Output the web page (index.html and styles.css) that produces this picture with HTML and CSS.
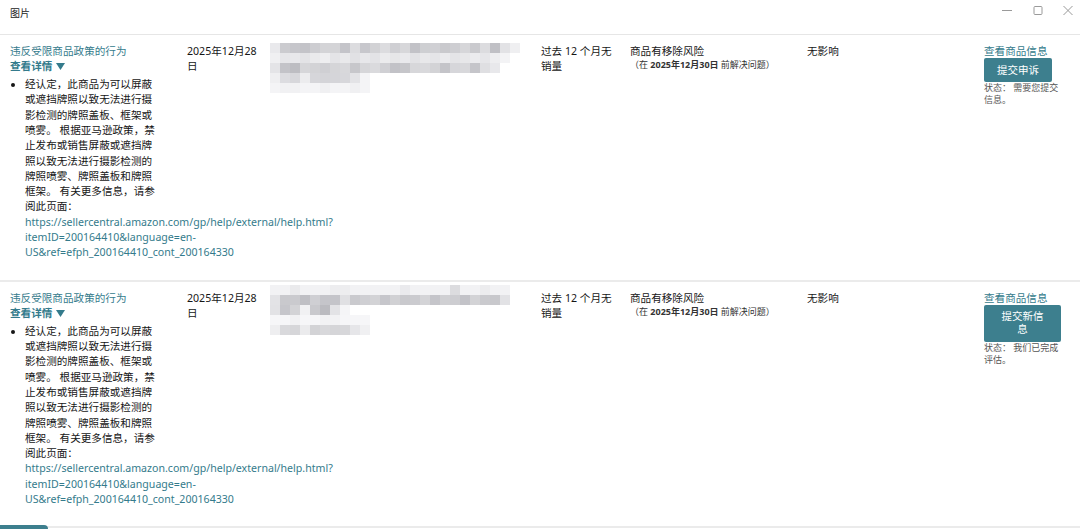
FILE: index.html
```html
<!DOCTYPE html>
<html lang="zh-CN">
<head>
<meta charset="utf-8">
<title>图片</title>
<link rel="stylesheet" href="styles.css">
</head>
<body>
<div class="window">
  <header class="titlebar">
    <span class="title">图片</span>
    <div class="controls">
      <span class="ctl"><svg width="20" height="12" viewBox="0 0 20 12"><path d="M5 6.5h10" stroke="#9a9a9a" stroke-width="1" fill="none"/></svg></span>
      <span class="ctl"><svg width="20" height="12" viewBox="0 0 20 12"><rect x="6" y="2.5" width="8" height="8" rx="1" stroke="#9a9a9a" stroke-width="1" fill="none"/></svg></span>
      <span class="ctl"><svg width="20" height="12" viewBox="0 0 20 12"><path d="M5.5 2l9 9M14.5 2l-9 9" stroke="#9a9a9a" stroke-width="1" fill="none"/></svg></span>
    </div>
  </header>

  <section class="rows">
    <div class="row">
      <div class="cell issue">
        <a class="link">违反受限商品政策的行为</a>
        <a class="link details">查看详情<svg class="caret" width="9" height="7" viewBox="0 0 9 7"><path d="M0 0h9L4.5 7z" fill="currentColor"/></svg></a>
        <ul class="reasons">
          <li>经认定，此商品为可以屏蔽或遮挡牌照以致无法进行摄影检测的牌照盖板、框架或喷雾。 根据亚马逊政策，禁止发布或销售屏蔽或遮挡牌照以致无法进行摄影检测的牌照喷雾、牌照盖板和牌照框架。 有关更多信息，请参阅此页面：<span class="url">https://sellercentral.amazon.com/gp/help/external/help.html?<br>itemID=200164410&amp;language=en-<br>US&amp;ref=efph_200164410_cont_200164330</span></li>
        </ul>
      </div>
      <div class="cell date">2025年12月28日</div>
      <div class="cell product">
        <svg class="blur" width="260" height="56" viewBox="0 0 260 56">
          <g transform="translate(0 5)">
            <rect x="0" y="0" width="10" height="10" fill="#e9e9ec"/><rect x="10" y="0" width="10" height="10" fill="#cbcbcf"/><rect x="20" y="0" width="10" height="10" fill="#c6c6cb"/><rect x="30" y="0" width="10" height="10" fill="#c3c3c8"/><rect x="40" y="0" width="10" height="10" fill="#cdcdd1"/><rect x="50" y="0" width="20" height="10" fill="#d4d4d7"/><rect x="70" y="0" width="10" height="10" fill="#c4c4c9"/><rect x="80" y="0" width="10" height="10" fill="#dcdcdf"/><rect x="90" y="0" width="10" height="10" fill="#c7c7cc"/><rect x="100" y="0" width="10" height="10" fill="#d2d2d5"/><rect x="110" y="0" width="10" height="10" fill="#dcdcdf"/><rect x="120" y="0" width="10" height="10" fill="#cfcfd3"/><rect x="130" y="0" width="10" height="10" fill="#d7d7da"/><rect x="140" y="0" width="10" height="10" fill="#c2c2c7"/><rect x="150" y="0" width="10" height="10" fill="#cecfd2"/><rect x="160" y="0" width="10" height="10" fill="#d0d0d4"/><rect x="170" y="0" width="10" height="10" fill="#c9c9cd"/><rect x="180" y="0" width="10" height="10" fill="#ceced2"/><rect x="190" y="0" width="10" height="10" fill="#d6d6d9"/><rect x="200" y="0" width="10" height="10" fill="#cacace"/><rect x="210" y="0" width="10" height="10" fill="#dcdcdf"/><rect x="220" y="0" width="10" height="10" fill="#c0c0c5"/><rect x="230" y="0" width="10" height="10" fill="#e2e2e5"/><rect x="240" y="0" width="10" height="10" fill="#efeff1"/>
            <rect x="0" y="10" width="10" height="10" fill="#f0f0f2"/><rect x="10" y="10" width="10" height="10" fill="#e6e6e9"/><rect x="20" y="10" width="10" height="10" fill="#e8e8eb"/><rect x="30" y="10" width="10" height="10" fill="#e3e3e6"/><rect x="40" y="10" width="10" height="10" fill="#eaeaec"/><rect x="50" y="10" width="10" height="10" fill="#eeeef0"/><rect x="60" y="10" width="10" height="10" fill="#e4e4e7"/><rect x="70" y="10" width="10" height="10" fill="#e9e9eb"/><rect x="80" y="10" width="10" height="10" fill="#e1e1e4"/><rect x="90" y="10" width="10" height="10" fill="#e7e7ea"/><rect x="100" y="10" width="10" height="10" fill="#e3e3e6"/><rect x="110" y="10" width="10" height="10" fill="#ebebed"/><rect x="120" y="10" width="10" height="10" fill="#e6e6e8"/><rect x="130" y="10" width="10" height="10" fill="#e9e9ec"/><rect x="140" y="10" width="10" height="10" fill="#e2e2e5"/><rect x="150" y="10" width="10" height="10" fill="#e8e8ea"/><rect x="160" y="10" width="10" height="10" fill="#e5e5e8"/><rect x="170" y="10" width="10" height="10" fill="#eaeaed"/><rect x="180" y="10" width="10" height="10" fill="#e4e4e7"/><rect x="190" y="10" width="10" height="10" fill="#e7e7e9"/><rect x="200" y="10" width="10" height="10" fill="#ebebee"/><rect x="210" y="10" width="10" height="10" fill="#e6e6e9"/><rect x="220" y="10" width="10" height="10" fill="#eeeef0"/><rect x="230" y="10" width="10" height="10" fill="#f3f3f5"/>
            <rect x="0" y="20" width="10" height="10" fill="#e4e4e7"/><rect x="10" y="20" width="10" height="10" fill="#c3c3c8"/><rect x="20" y="20" width="10" height="10" fill="#bdbdc2"/><rect x="30" y="20" width="10" height="10" fill="#d6d6d9"/><rect x="40" y="20" width="10" height="10" fill="#d3d3d6"/><rect x="50" y="20" width="10" height="10" fill="#cfcfd3"/><rect x="60" y="20" width="10" height="10" fill="#d5d5d8"/><rect x="70" y="20" width="10" height="10" fill="#d8d8db"/><rect x="80" y="20" width="10" height="10" fill="#c7c7cb"/><rect x="90" y="20" width="10" height="10" fill="#d6d6d9"/><rect x="100" y="20" width="10" height="10" fill="#dadadd"/><rect x="110" y="20" width="10" height="10" fill="#d0d0d4"/><rect x="120" y="20" width="10" height="10" fill="#c2c2c7"/><rect x="130" y="20" width="10" height="10" fill="#c6c6ca"/><rect x="140" y="20" width="10" height="10" fill="#d7d7da"/><rect x="150" y="20" width="10" height="10" fill="#d9d9dc"/><rect x="160" y="20" width="10" height="10" fill="#d3d3d6"/><rect x="170" y="20" width="10" height="10" fill="#c4c4c9"/><rect x="180" y="20" width="10" height="10" fill="#d6d6da"/><rect x="190" y="20" width="10" height="10" fill="#d8d8db"/><rect x="200" y="20" width="10" height="10" fill="#c5c5ca"/><rect x="210" y="20" width="10" height="10" fill="#dfdfe2"/><rect x="220" y="20" width="10" height="10" fill="#e8e8eb"/>
            <rect x="0" y="30" width="10" height="10" fill="#efeff1"/><rect x="10" y="30" width="10" height="10" fill="#dcdce0"/><rect x="20" y="30" width="10" height="10" fill="#d7d7db"/><rect x="30" y="30" width="10" height="10" fill="#ececee"/><rect x="40" y="30" width="10" height="10" fill="#d6d6da"/><rect x="50" y="30" width="10" height="10" fill="#d4d4d8"/><rect x="60" y="30" width="10" height="10" fill="#d5d5d9"/><rect x="70" y="30" width="10" height="10" fill="#d7d7db"/><rect x="80" y="30" width="10" height="10" fill="#e3e3e6"/><rect x="90" y="30" width="10" height="10" fill="#f4f4f6"/>
            <rect x="0" y="40" width="100" height="10" fill="#f4f4f6"/><rect x="10" y="40" width="20" height="10" fill="#f1f1f3"/><rect x="50" y="40" width="10" height="10" fill="#f0f0f2"/><rect x="80" y="40" width="10" height="10" fill="#f0f0f2"/>
          </g>
        </svg>
      </div>
      <div class="cell sales">过去 12 个月无销量</div>
      <div class="cell risk">
        <div>商品有移除风险</div>
        <div class="risk-sub">（在 <b>2025年12月30日</b> 前解决问题）</div>
      </div>
      <div class="cell impact">无影响</div>
      <div class="cell action">
        <a class="link">查看商品信息</a>
        <button class="btn" type="button">提交申诉</button>
        <div class="status">状态： 需要您提交信息。</div>
      </div>
    </div>

    <div class="row">
      <div class="cell issue">
        <a class="link">违反受限商品政策的行为</a>
        <a class="link details">查看详情<svg class="caret" width="9" height="7" viewBox="0 0 9 7"><path d="M0 0h9L4.5 7z" fill="currentColor"/></svg></a>
        <ul class="reasons">
          <li>经认定，此商品为可以屏蔽或遮挡牌照以致无法进行摄影检测的牌照盖板、框架或喷雾。 根据亚马逊政策，禁止发布或销售屏蔽或遮挡牌照以致无法进行摄影检测的牌照喷雾、牌照盖板和牌照框架。 有关更多信息，请参阅此页面：<span class="url">https://sellercentral.amazon.com/gp/help/external/help.html?<br>itemID=200164410&amp;language=en-<br>US&amp;ref=efph_200164410_cont_200164330</span></li>
        </ul>
      </div>
      <div class="cell date">2025年12月28日</div>
      <div class="cell product">
        <svg class="blur" width="260" height="56" viewBox="0 0 260 56">
          <g>
            <rect x="0" y="0" width="240" height="10" fill="#f2f2f4"/><rect x="20" y="0" width="10" height="10" fill="#eaeaec"/><rect x="60" y="0" width="20" height="10" fill="#ededef"/><rect x="130" y="0" width="10" height="10" fill="#eaeaed"/><rect x="180" y="0" width="10" height="10" fill="#dcdcdf"/><rect x="210" y="0" width="10" height="10" fill="#ececee"/>
            <rect x="0" y="10" width="10" height="10" fill="#e3e3e6"/><rect x="10" y="10" width="10" height="10" fill="#c9c9cd"/><rect x="20" y="10" width="10" height="10" fill="#cacace"/><rect x="30" y="10" width="10" height="10" fill="#bfbfc4"/><rect x="40" y="10" width="10" height="10" fill="#cfcfd3"/><rect x="50" y="10" width="10" height="10" fill="#c5c5ca"/><rect x="60" y="10" width="10" height="10" fill="#c4c4c9"/><rect x="70" y="10" width="10" height="10" fill="#e0e0e3"/><rect x="80" y="10" width="10" height="10" fill="#cacace"/><rect x="90" y="10" width="10" height="10" fill="#cfcfd3"/><rect x="100" y="10" width="10" height="10" fill="#d3d3d6"/><rect x="110" y="10" width="10" height="10" fill="#c6c6cb"/><rect x="120" y="10" width="10" height="10" fill="#d1d1d4"/><rect x="130" y="10" width="10" height="10" fill="#c9c9cd"/><rect x="140" y="10" width="10" height="10" fill="#cbcbcf"/><rect x="150" y="10" width="10" height="10" fill="#d4d4d7"/><rect x="160" y="10" width="10" height="10" fill="#c5c5ca"/><rect x="170" y="10" width="10" height="10" fill="#d0d0d3"/><rect x="180" y="10" width="10" height="10" fill="#cdcdd1"/><rect x="190" y="10" width="10" height="10" fill="#c3c3c8"/><rect x="200" y="10" width="10" height="10" fill="#d3d3d6"/><rect x="210" y="10" width="10" height="10" fill="#cacace"/><rect x="220" y="10" width="10" height="10" fill="#c8c8cc"/><rect x="230" y="10" width="10" height="10" fill="#e2e2e5"/>
            <rect x="0" y="20" width="10" height="10" fill="#e2e2e5"/><rect x="10" y="20" width="10" height="10" fill="#c6c6cb"/><rect x="20" y="20" width="10" height="10" fill="#d3d3d6"/><rect x="30" y="20" width="10" height="10" fill="#f1f1f3"/><rect x="40" y="20" width="10" height="10" fill="#c9c9cd"/><rect x="50" y="20" width="10" height="10" fill="#bbbbc0"/><rect x="60" y="20" width="10" height="10" fill="#e3e3e6"/><rect x="70" y="20" width="10" height="10" fill="#f5f5f7"/>
            <rect x="0" y="30" width="100" height="10" fill="#f6f6f8"/><rect x="20" y="30" width="10" height="10" fill="#f1f1f3"/><rect x="50" y="30" width="20" height="10" fill="#f2f2f4"/>
            <rect x="0" y="40" width="10" height="10" fill="#eeeef0"/><rect x="10" y="40" width="10" height="10" fill="#d9d9dc"/><rect x="20" y="40" width="10" height="10" fill="#d6d6d9"/><rect x="30" y="40" width="10" height="10" fill="#ebebed"/><rect x="40" y="40" width="10" height="10" fill="#d3d3d6"/><rect x="50" y="40" width="10" height="10" fill="#d8d8db"/><rect x="60" y="40" width="10" height="10" fill="#d5d5d8"/><rect x="70" y="40" width="10" height="10" fill="#d7d7da"/><rect x="80" y="40" width="10" height="10" fill="#e6e6e9"/><rect x="90" y="40" width="10" height="10" fill="#f0f0f2"/>
          </g>
        </svg>
      </div>
      <div class="cell sales">过去 12 个月无销量</div>
      <div class="cell risk">
        <div>商品有移除风险</div>
        <div class="risk-sub">（在 <b>2025年12月30日</b> 前解决问题）</div>
      </div>
      <div class="cell impact">无影响</div>
      <div class="cell action">
        <a class="link">查看商品信息</a>
        <button class="btn" type="button">提交新信息</button>
        <div class="status">状态： 我们已完成评估。</div>
      </div>
    </div>
  </section>
  <div class="scroll-thumb"></div>
</div>
</body>
</html>
```

FILE: styles.css
```css
* { box-sizing: border-box; }

html, body {
  margin: 0;
  padding: 0;
  background: #ffffff;
}

body {
  width: 1080px;
  height: 531px;
  overflow: hidden;
  font-family: "Noto Sans", "Noto Sans CJK SC", sans-serif;
  font-size: 10.6px;
  line-height: 15.3px;
  color: #161616;
}

.titlebar {
  height: 35px;
  border-bottom: 1px solid #e6e6e6;
  display: flex;
  justify-content: space-between;
  align-items: flex-start;
  padding-left: 10px;
}

.title {
  font-size: 10px;
  line-height: 14px;
  margin-top: 6px;
  color: #222;
}

.controls {
  display: flex;
  gap: 10.5px;
  padding-right: 2px;
  padding-top: 4px;
}

.ctl {
  display: block;
  width: 20px;
  height: 12px;
}

.ctl svg { display: block; }

.row {
  display: grid;
  grid-template-columns: 177px 71px 283px 89px 177px 177px 77px;
  align-items: start;
  padding: 9px 0 19px 10px;
  border-bottom: 2px solid #ebebeb;
}

.link {
  display: block;
  color: #347b8c;
  text-decoration: none;
  cursor: pointer;
}

.details {
  font-weight: 700;
}

.caret {
  margin-left: 4px;
  vertical-align: 0px;
}

.reasons {
  margin: 2.5px 0 0;
  padding-left: 15px;
}

.reasons li {
  max-width: 133px;
}

.url {
  display: block;
  white-space: nowrap;
  color: #347b8c;
}

.date {
  max-width: 71px;
}

.blur {
  display: block;
  margin: -6px 0 0 12px;
}

.sales {
  max-width: 76px;
}

.risk-sub {
  font-size: 9px;
  line-height: 11px;
  color: #333;
}

.risk-sub b { font-weight: 700; }

.btn {
  display: block;
  width: fit-content;
  max-width: 100%;
  margin: -1px 0 0;
  padding: 5.5px 13px;
  border: none;
  border-radius: 2px;
  background: #3d7f8e;
  color: #ffffff;
  font-family: inherit;
  font-size: 10.5px;
  line-height: 13px;
  text-align: center;
}

.status {
  font-size: 9px;
  line-height: 12px;
  color: #555;
}

.scroll-thumb {
  width: 48px;
  height: 4px;
  margin-top: -3px;
  background: #3d7f8e;
  border-radius: 0 4px 0 0;
}
```
